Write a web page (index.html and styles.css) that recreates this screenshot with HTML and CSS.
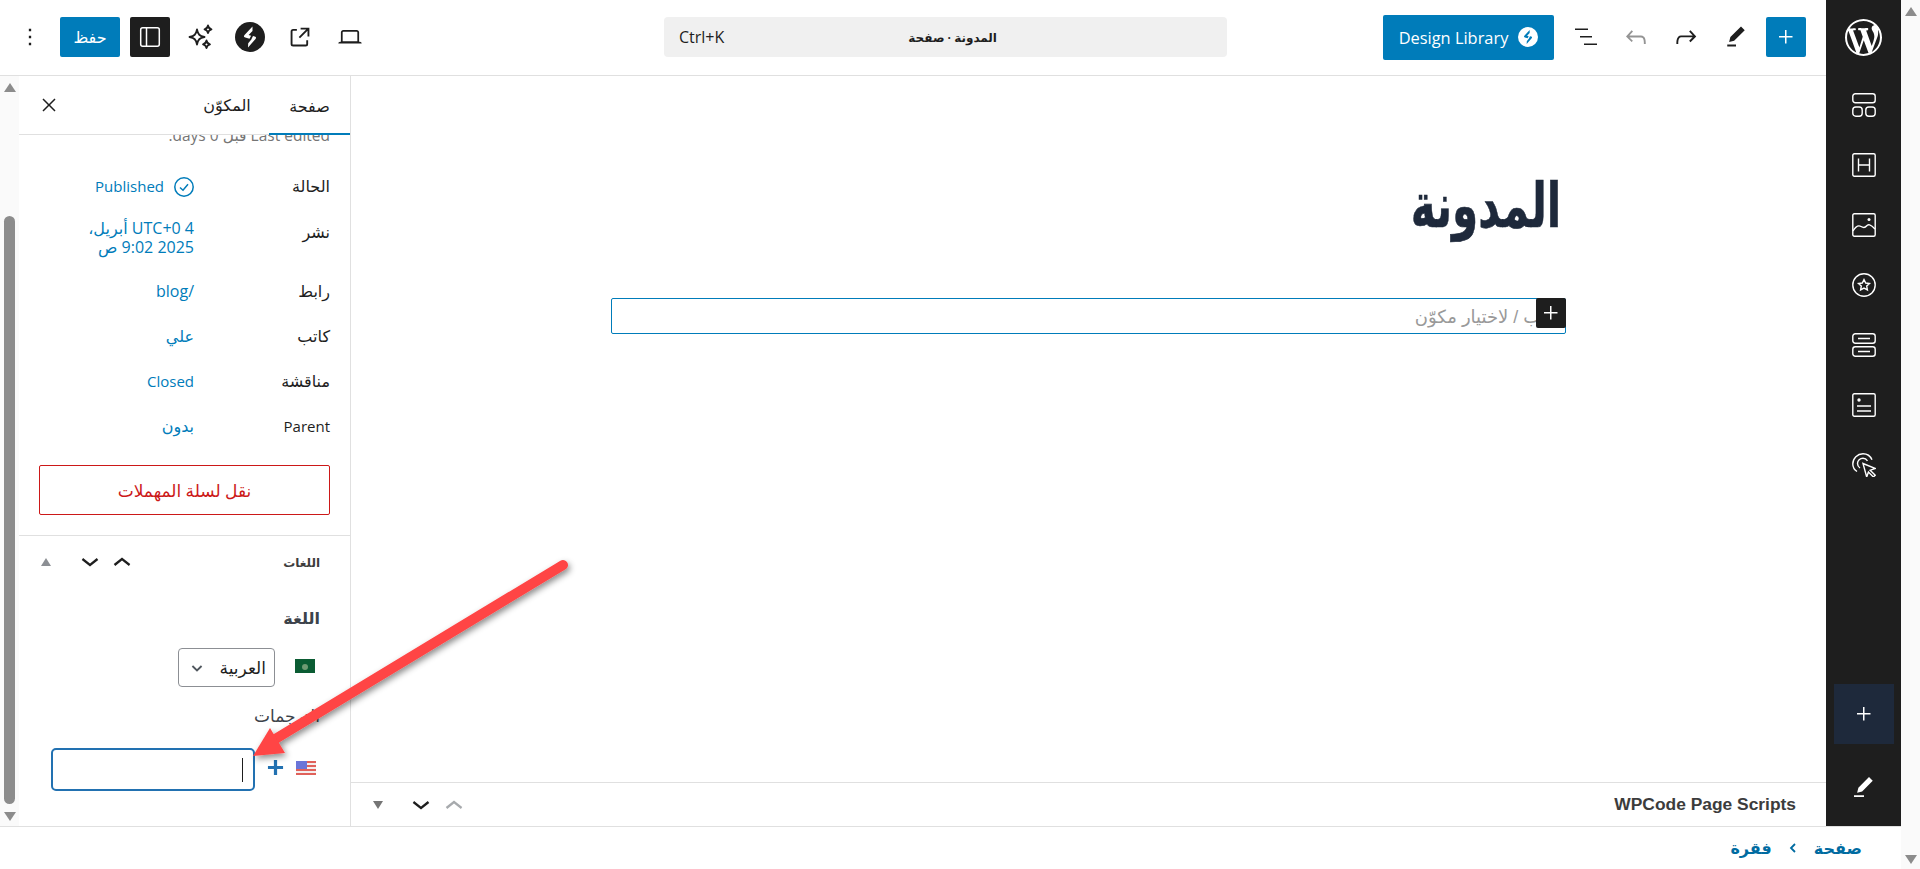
FILE: index.html
```html
<!DOCTYPE html>
<html lang="ar" dir="rtl">
<head>
<meta charset="utf-8">
<title>المدونة</title>
<link rel="stylesheet" href="styles.css">
</head>
<body>
<div class="page">
  <div class="vscroll">
    <span class="tri tri-up"></span>
    <span class="tri tri-down"></span>
  </div>
  <div class="shell">
    <div class="main">
      <aside class="rail">
        <div class="rail-top">
          <svg class="wp" viewBox="0 0 20 20"><path fill="#fff" d="M20 10c0-5.51-4.49-10-10-10C4.48 0 0 4.49 0 10c0 5.52 4.48 10 10 10 5.51 0 10-4.48 10-10zM7.78 15.37L4.37 6.22c.55-.02 1.17-.08 1.17-.08.5-.06.44-1.13-.06-1.11 0 0-1.45.11-2.37.11-.18 0-.37 0-.58-.01C4.12 2.69 6.87 1.11 10 1.11c2.33 0 4.45.87 6.05 2.34-.68-.11-1.65.39-1.65 1.58 0 .74.45 1.36.9 2.1.35.61.55 1.36.55 2.46 0 1.49-1.4 5-1.4 5l-3.03-8.37c.54-.02.82-.17.82-.17.5-.05.44-1.25-.06-1.22 0 0-1.44.12-2.38.12-.87 0-2.33-.12-2.33-.12-.5-.03-.56 1.2-.06 1.22l.92.08 1.26 3.41zM17.41 10c.24-.64.74-1.87.43-4.25.7 1.29 1.05 2.71 1.05 4.25 0 3.29-1.73 6.24-4.4 7.78.97-2.59 1.94-5.2 2.92-7.78zM6.1 18.09C3.12 16.65 1.11 13.53 1.11 10c0-1.3.23-2.48.72-3.59C3.25 10.3 4.67 14.2 6.1 18.09zm4.03-6.63l2.58 6.98c-.86.29-1.76.45-2.71.45-.79 0-1.57-.11-2.29-.33.81-2.38 1.62-4.74 2.42-7.1z"/></svg>
        </div>
        <div class="rail-icons">
          <svg class="ri" viewBox="0 0 24 24"><rect x="0.8" y="0.8" width="22.4" height="9" rx="2.5"/><rect x="0.8" y="14" width="9.4" height="9.2" rx="3"/><rect x="13.8" y="14" width="9.4" height="9.2" rx="3"/></svg>
          <svg class="ri" viewBox="0 0 24 24"><rect x="0.8" y="0.8" width="22.4" height="22.4" rx="1.5"/><path d="M6.5 5.5v13M17.5 5.5v13M6.5 12h11"/></svg>
          <svg class="ri" viewBox="0 0 24 24"><rect x="0.8" y="0.8" width="22.4" height="22.4" rx="1.5"/><path d="M1 18c3-5 5.500-6 8-4.500s4 1.500 5.500-.5 4-2 8.500 3"/><circle cx="17" cy="6.500" r="1.500" fill="#fff" stroke="none"/></svg>
          <svg class="ri" viewBox="0 0 24 24"><circle cx="12" cy="12" r="11.200"/><path d="M12 6.500l1.700 3.500 3.800.5-2.800 2.600.7 3.800-3.400-1.800-3.400 1.800.7-3.800-2.800-2.600 3.800-.5z"/></svg>
          <svg class="ri" viewBox="0 0 24 24"><rect x="0.8" y="0.8" width="22.400" height="9.400" rx="2.500"/><rect x="0.8" y="13.800" width="22.400" height="9.400" rx="2.500"/><path d="M6 5.500h12M6 18.500h12"/></svg>
          <svg class="ri" viewBox="0 0 24 24"><rect x="0.8" y="0.8" width="22.400" height="22.400" rx="1.500"/><circle cx="7" cy="7" r="1.700" fill="#fff" stroke="none"/><path d="M5 13h14M5 18h14"/></svg>
          <svg class="ri" viewBox="0 0 24 24"><path d="M5 18.500C2 16.500 .8 14 .8 11 .8 5 5.500 .8 11 .8c4 0 7.500 2.500 9 6"/><path d="M8 15c-1.500-1-2.500-2.500-2.500-4.500 0-3 2.500-5.200 5.500-5.200 2 0 3.500 1 4.500 2.500"/><path d="M11 10.500l12.500 5-5.300 1.700 5 5-1.800 1.800-5-5-1.700 5z"/></svg>
        </div>
        <div class="rail-bottom">
          <div class="rail-add"><svg class="ic-24" viewBox="0 0 24 24"><path fill="#fff" d="M11 12.500V18.500H12.500V12.500H18.500V11H12.500V5H11V11H5V12.500H11Z"/></svg></div>
          <div class="rail-pen"><svg class="ic-30" viewBox="0 0 24 24"><path fill="#fff" d="m19 7-3-3-8.500 8.500-1 4 4-1L19 7Zm-7 11.500H4V20h8v-1.500Z"/></svg></div>
        </div>
      </aside>
      <div class="workspace">
        <header class="topbar">
          <div class="tools-start">
            <button class="tb tb-blue"><svg class="ic-24" viewBox="0 0 24 24"><path fill="#fff" d="M11 12.500V18.500H12.500V12.500H18.500V11H12.500V5H11V11H5V12.500H11Z"/></svg></button>
            <button class="tb"><svg class="ic-30" viewBox="0 0 24 24"><path fill="#1e1e1e" d="m19 6.500-3-3-8.500 8.500-1 4 4-1L19 6.500Zm-7 11.500H5V19.500h7V18Z"/></svg></button>
            <button class="tb"><svg class="ic-30" viewBox="0 0 24 24"><path fill="#1e1e1e" d="M15.600 6.500l-1.100 1 2.900 3.300H8c-.9 0-1.700.3-2.300.9-1.400 1.500-1.400 4.200-1.400 5.600v.2h1.500v-.3c0-1.100 0-3.500 1-4.500.3-.3.7-.5 1.300-.5h9.200L14.500 15l1.100 1.100 4.600-4.600-4.600-5z"/></svg></button>
            <button class="tb"><svg class="ic-30" viewBox="0 0 24 24"><path fill="#949494" d="M18.300 11.700c-.6-.6-1.400-.9-2.300-.9H6.700l2.900-3.300-1.100-1-4.500 5L8.500 16l1-1-2.700-2.700H16c.5 0 .9.200 1.300.5 1 1 1 3.400 1 4.500v.3h1.500v-.2c0-1.500 0-4.300-1.500-5.700z"/></svg></button>
            <button class="tb"><svg class="ic-24" viewBox="0 0 24 24"><path fill="#1e1e1e" d="M1 3.500h13v1.500H1V3.500Zm5 7.500h12v1.500H6V11Zm17 7.500H10V20h13v-1.500Z"/></svg></button>
            <button class="design-lib"><svg class="ic-20" viewBox="0 0 30 30"><circle cx="15" cy="15" r="15" fill="#fff"/><path class="s-bolt" d="M17.500 4.500 9.500 13c-1 1.200-.6 2.200.8 2.600l4.200 1.200 1.600-3-2.500-.7 3.900-4.200zM13 25.500l7.500-8.500c1-1.200.6-2.200-.8-2.600l-1.700-.5-1.500 3 .2.100-3.500 4.200z"/></svg><span dir="ltr">Design Library</span></button>
          </div>
          <div class="search">
            <span class="search-title">المدونة · صفحة</span>
            <span class="search-key" dir="ltr">Ctrl+K</span>
          </div>
          <div class="tools-end">
            <button class="tb"><svg class="ic-28" viewBox="0 0 24 24"><path fill="#1e1e1e" d="M20.500 16h-.7V8c0-1.100-.9-2-2-2H6.200c-1.100 0-2 .9-2 2v8h-.7c-.8 0-1.500.7-1.500 1.500h20c0-.8-.7-1.500-1.500-1.500zM5.700 8c0-.3.2-.5.5-.5h11.600c.3 0 .5.200.5.500v7.600H5.700V8z"/></svg></button>
            <button class="tb"><svg class="ic-30" viewBox="0 0 24 24"><path fill="#1e1e1e" d="M19.500 4.500h-7V6h4.440l-5.970 5.970 1.060 1.060L18 7.060v4.440h1.500v-7Zm-13 1a2 2 0 0 0-2 2v10a2 2 0 0 0 2 2h10a2 2 0 0 0 2-2v-3H17v3a.5.5 0 0 1-.5.5h-10a.5.5 0 0 1-.5-.5v-10a.5.5 0 0 1 .5-.5h3V5.500h-3Z"/></svg></button>
            <button class="tb"><svg class="ic-30" viewBox="0 0 30 30"><circle cx="15" cy="15" r="15" fill="#1e1e1e"/><path fill="#fff" d="M17.500 4.500 9.500 13c-1 1.200-.6 2.200.8 2.600l4.200 1.200 1.600-3-2.500-.7 3.900-4.200zM13 25.500l7.500-8.500c1-1.200.6-2.200-.8-2.600l-1.700-.5-1.500 3 .2.100-3.500 4.200z"/></svg></button>
            <button class="tb"><svg class="ic-30" viewBox="0 0 30 30"><g fill="none" stroke="#1e1e1e" stroke-width="1.800" stroke-linejoin="round"><path d="M12 7.500c1 5 2.500 6.500 7.500 7.500-5 1-6.500 2.500-7.500 7.500-1-5-2.500-6.500-7.500-7.500 5-1 6.500-2.500 7.500-7.500z"/><path d="M23 3.500c.5 2.500 1.200 3.200 3.500 3.800-2.300.5-3 1.200-3.500 3.700-.5-2.500-1.200-3.200-3.500-3.700 2.300-.6 3-1.300 3.500-3.800z"/><path d="M21.500 18.500c.5 2.500 1.200 3.200 3.500 3.800-2.300.5-3 1.200-3.500 3.700-.5-2.500-1.200-3.200-3.500-3.700 2.300-.6 3-1.300 3.500-3.800z"/></g></svg></button>
            <button class="tb tb-dark"><svg class="ic-24" viewBox="0 0 24 24"><rect x="2.700" y="2.700" width="18.600" height="18.600" rx="2" fill="none" stroke="#fff" stroke-width="1.500"/><path d="M8.500 3v18" stroke="#fff" stroke-width="1.500"/></svg></button>
            <button class="save">حفظ</button>
            <button class="tb"><svg class="ic-28" viewBox="0 0 24 24"><path fill="#1e1e1e" d="M13 19h-2v-2h2v2zm0-6h-2v-2h2v2zm0-6h-2V5h2v2z"/></svg></button>
          </div>
        </header>
        <div class="work-row">
          <section class="canvas">
            <div class="canvas-scroll">
              <div class="doc">
                <h1 class="doc-title">المدونة</h1>
                <div class="block">
                  <span class="block-hint">اكتب / لاختيار مكوّن</span>
                  <span class="block-add"><svg class="ic-24" viewBox="0 0 24 24"><path fill="#fff" d="M11 12.500V18.500H12.500V12.500H18.500V11H12.500V5H11V11H5V12.500H11Z"/></svg></span>
                </div>
              </div>
            </div>
            <div class="meta-bar">
              <span class="meta-title" dir="ltr">WPCode Page Scripts</span>
              <div class="panel-ctrls ctrls-bottom">
                <svg class="ic-chev muted" viewBox="0 0 24 24"><path d="M6.500 13.400L12 9l5.500 4.400-.9 1.200L12 11l-4.500 3.600-1-1.200z"/></svg>
                <svg class="ic-chev" viewBox="0 0 24 24"><path d="M17.500 10.600L12 15l-5.500-4.400.9-1.200L12 13l4.500-3.600 1 1.200z"/></svg>
                <span class="tri-small tri-small-down"></span>
              </div>
            </div>
          </section>
          <aside class="settings">
            <div class="settings-body">
              <div class="tabs">
                <span class="tab tab-active">صفحة</span>
                <span class="tab">المكوّن</span>
                <svg class="tabs-close ic-24" viewBox="0 0 24 24"><path fill="#1e1e1e" d="m13.060 12 5.470-5.470-1.060-1.060L12 10.940 6.530 5.470 5.470 6.530 10.940 12l-5.470 5.470 1.060 1.060L12 13.060l5.470 5.470 1.060-1.060L13.060 12Z"/></svg>
              </div>
              <div class="settings-scroll">
                <div class="panel">
                  <p class="edited">Last edited قبل 0 days.</p>
                  <div class="row"><span class="row-label">الحالة</span><span class="row-value row-latin status"><svg class="ic-20" viewBox="0 0 20 20"><circle cx="10" cy="10" r="9.200" fill="none" stroke="#007cba" stroke-width="1.500"/><path d="M6 10.500l3 2.700 5-6" fill="none" stroke="#007cba" stroke-width="1.500"/></svg><span dir="ltr">Published</span></span></div>
                  <div class="row row-date"><span class="row-label">نشر</span><span class="row-value">4 UTC+0 أبريل،<br>2025 9:02 ص</span></div>
                  <div class="row"><span class="row-label">رابط</span><span class="row-value">/blog</span></div>
                  <div class="row"><span class="row-label">كاتب</span><span class="row-value">علي</span></div>
                  <div class="row"><span class="row-label">مناقشة</span><span class="row-value row-latin">Closed</span></div>
                  <div class="row"><span class="row-label row-latin">Parent</span><span class="row-value">بدون</span></div>
                  <button class="trash">نقل لسلة المهملات</button>
                </div>
                <div class="panel-lang">
                  <div class="lang-head">
                    <span class="lang-title">اللغات</span>
                    <div class="panel-ctrls ctrls-lang">
                      <svg class="ic-chev" viewBox="0 0 24 24"><path d="M6.500 13.400L12 9l5.500 4.400-.9 1.200L12 11l-4.500 3.600-1-1.200z"/></svg>
                      <svg class="ic-chev" viewBox="0 0 24 24"><path d="M17.500 10.600L12 15l-5.500-4.400.9-1.200L12 13l4.500-3.600 1 1.200z"/></svg>
                      <span class="tri-small tri-small-up"></span>
                    </div>
                  </div>
                  <div class="lang-label lang-label-first">اللغة</div>
                  <div class="lang-row">
                    <svg class="flag" viewBox="0 0 20 14"><rect width="20" height="14" fill="#0b5c33"/><circle cx="10" cy="8" r="3" fill="#6f9a72"/></svg>
                    <div class="select"><span>العربية</span><svg class="ic-chev-s" viewBox="0 0 24 24"><path d="M17.500 9.600L12 15 6.500 9.600" fill="none" stroke="#50575e" stroke-width="2.200"/></svg></div>
                  </div>
                  <div class="lang-label lang-label-second">الترجمات</div>
                  <div class="trans-row">
                    <svg class="flag flag-us" viewBox="0 0 20 14"><rect width="20" height="14" fill="#f4eeee"/><path d="M0 1h20M0 5h20M0 9h20M0 13h20" stroke="#e0615a" stroke-width="2"/><rect width="11" height="8" fill="#6a75d8"/></svg>
                    <svg class="ic-plus" viewBox="0 0 18 18"><path d="M9 1v16M1 9h16" stroke="#2271b1" stroke-width="3.400" fill="none"/></svg>
                    <div class="trans-input"><span class="caret"></span></div>
                  </div>
                </div>
              </div>
            </div>
            <div class="side-scroll">
              <span class="tri tri-up"></span>
              <span class="side-thumb"></span>
              <span class="tri tri-down"></span>
            </div>
          </aside>
        </div>
      </div>
    </div>
    <footer class="crumbs">
      <span>صفحة</span>
      <svg class="crumb-sep" viewBox="0 0 12 12"><path d="M8 2 4 6l4 4" fill="none" stroke="#006ba1" stroke-width="1.800"/></svg>
      <span>فقرة</span>
    </footer>
  </div>
</div>
<svg class="arrow" viewBox="0 0 1920 869">
  <defs><filter id="arrow-shadow" x="-10%" y="-10%" width="120%" height="130%"><feDropShadow dx="2" dy="3" stdDeviation="3" flood-color="#000" flood-opacity=".45"/></filter></defs>
  <g filter="url(#arrow-shadow)">
    <path d="M563 565 272 741" stroke="#ff4444" stroke-width="10" stroke-linecap="round" fill="none"/>
    <path d="M253 756 270 728 285 753Z" fill="#ff4444"/>
  </g>
</svg>
</body>
</html>
```

FILE: styles.css
```css
* { box-sizing: border-box; }
html, body { margin: 0; height: 100%; overflow: hidden; background: #fff; }
body { font-family: "Open Sans", "DejaVu Sans", sans-serif; font-size: 14px; color: #1e1e1e; }
button { font: inherit; border: 0; background: none; padding: 0; margin: 0; color: inherit; }
svg { display: block; flex: none; }
p, h1 { margin: 0; }

.page { display: flex; height: 869px; width: 1920px; }
.vscroll { width: 19px; flex: none; background: #fafafa; display: flex; flex-direction: column; justify-content: space-between; align-items: center; padding: 7px 0 5px; }
.shell { flex: 1; display: flex; flex-direction: column; min-width: 0; }
.main { height: 826px; display: flex; }

.tri { display: block; width: 0; height: 0; border-left: 6.5px solid transparent; border-right: 6.5px solid transparent; }
.tri-up { border-bottom: 9px solid #8c8c8c; }
.tri-down { border-top: 9px solid #8c8c8c; }
.tri-small { display: block; width: 0; height: 0; border-left: 5px solid transparent; border-right: 5px solid transparent; }
.tri-small-up { border-bottom: 8px solid #8c8f94; }
.tri-small-down { border-top: 8px solid #757575; }

.rail { width: 75px; flex: none; background: #1e1e1e; display: flex; flex-direction: column; align-items: center; }
.rail-top { height: 75px; display: flex; align-items: center; justify-content: center; flex: none; }
.wp { width: 37px; height: 37px; }
.rail-icons { display: flex; flex-direction: column; gap: 36px; padding-top: 18px; align-items: center; }
.ri { width: 24px; height: 24px; fill: none; stroke: #fff; stroke-width: 1.400; }
.rail-bottom { margin-top: auto; display: flex; flex-direction: column; align-items: center; }
.rail-add { width: 60px; height: 60px; background: #1e293b; display: flex; align-items: center; justify-content: center; }
.rail-pen { height: 82px; display: flex; align-items: flex-start; justify-content: center; padding-top: 28px; }

.ic-24 { width: 24px; height: 24px; }
.ic-20 { width: 20px; height: 20px; }
.ic-28 { width: 28px; height: 28px; }
.ic-30 { width: 30px; height: 30px; }
.ic-chev { width: 36px; height: 36px; fill: #1e1e1e; }
.ic-chev.muted { fill: #a7aaad; }
.ic-chev-s { width: 20px; height: 20px; }
.ic-plus { width: 17px; height: 17px; margin-bottom: 4px; }
.s-bolt { fill: #007cba; }

.workspace { flex: 1; min-width: 0; display: flex; flex-direction: column; }
.topbar { height: 76px; flex: none; border-bottom: 1px solid #e0e0e0; display: flex; align-items: center; padding: 0 20px 1px 10px; }
.tools-start { display: flex; align-items: center; gap: 10px; }
.tools-end { display: flex; align-items: center; gap: 10px; margin-right: auto; }
.tb { width: 40px; height: 40px; border-radius: 2px; display: flex; align-items: center; justify-content: center; }
.tb-blue { background: #007cba; }
.tb-dark { background: #1e1e1e; }
.design-lib { width: 171px; height: 45px; margin-right: 2px; background: #007cba; color: #fff; border-radius: 2px; display: flex; align-items: center; justify-content: center; gap: 10px; font-size: 16.400px; }
.save { width: 60px; height: 40px; background: #007cba; color: #fff; border-radius: 2px; font-size: 16px; font-weight: 400; }
.search { width: 563px; height: 40px; margin-right: 156px; background: #f0f0f0; border-radius: 4px; display: flex; align-items: center; padding-left: 15px; }
.search-title { flex: 1; text-align: center; font-size: 12px; font-weight: 700; padding-right: 46px; }
.search-key { font-size: 16px; color: #1e1e1e; }

.work-row { flex: 1; display: flex; min-height: 0; }
.canvas { flex: 1; min-width: 0; display: flex; flex-direction: column; }
.canvas-scroll { flex: 1; display: flex; justify-content: center; min-height: 0; }
.doc { width: 955px; padding-top: 90px; }
.doc-title { font-family: "Liberation Sans", "DejaVu Sans", sans-serif; font-size: 62px; line-height: 80px; font-weight: 700; color: #1e293b; padding-right: 7px; height: 132px; transform: scaleX(.68); transform-origin: 100% 50%; -webkit-text-stroke: .6px #1e293b; }
.block { position: relative; height: 36px; border: 1px solid #007cba; border-radius: 2px; display: flex; align-items: center; padding-right: 5px; }
.block-hint { font-family: "Liberation Sans", "DejaVu Sans", sans-serif; font-size: 18px; color: #999; padding-top: 2px; }
.block-add { position: absolute; top: -1px; right: -1px; width: 30px; height: 30px; background: #1e1e1e; border-radius: 2px; display: flex; align-items: center; justify-content: center; }
.meta-bar { height: 44px; flex: none; border-top: 1px solid #e0e0e0; display: flex; align-items: center; justify-content: space-between; padding: 0 30px 0 22px; }
.meta-title { font-family: "Liberation Sans", sans-serif; font-weight: 700; font-size: 17.400px; color: #3c3c3c; }

.panel-ctrls { display: flex; align-items: center; }
.ctrls-bottom .ic-chev { margin-right: -3px; }
.ctrls-bottom .tri-small { margin-right: 20px; }
.ctrls-lang .ic-chev + .ic-chev { margin-right: -4px; }
.ctrls-lang .tri-small { margin-right: 21px; }

.settings { width: 351px; flex: none; display: flex; border-right: 1px solid #e0e0e0; }
.settings-body { flex: 1; min-width: 0; display: flex; flex-direction: column; }
.side-scroll { width: 19px; flex: none; background: #fafafa; display: flex; flex-direction: column; align-items: center; padding: 7px 0 5px; }
.side-thumb { width: 11px; flex: 1; margin: 124px 0 8px; background: #8c8c8c; border-radius: 6px; }

.tabs { height: 59px; flex: none; border-bottom: 1px solid #e0e0e0; display: flex; align-items: stretch; position: relative; padding-left: 18px; }
.tab { width: 81px; display: flex; align-items: center; justify-content: center; font-size: 16px; }
.tab + .tab { width: 84px; }
.tab-active { box-shadow: inset 0 -2px 0 #007cba; margin-bottom: -1px; }
.tabs-close { margin: auto auto auto 0; }
.settings-scroll { flex: 1; min-height: 0; overflow: hidden; }
.panel { padding: 0 20px 20px; border-bottom: 1px solid #e0e0e0; }
.edited { margin-top: -9px; height: 38px; line-height: 18px; font-size: 15.500px; color: #757575; }
.row { display: flex; align-items: center; height: 45px; font-size: 16px; }
.row-label { width: 136px; flex: none; line-height: 19px; }
.row-value { color: #007cba; line-height: 19px; }
.row-latin { font-size: 15px; }
.status { display: flex; align-items: center; gap: 10px; }
.row-date { height: 60px; align-items: flex-start; padding-top: 10px; }
.row-date .row-label { margin-top: 4px; }
.trash { display: block; width: 291px; height: 50px; margin-top: 16px; border: 1px solid #cc1818; border-radius: 2px; color: #cc1818; font-size: 17px; }

.panel-lang { padding: 0 30px 0 0; }
.lang-head { height: 52px; display: flex; align-items: center; justify-content: space-between; padding-left: 22px; }
.lang-title { font-size: 12px; font-weight: 700; color: #3c3c3c; }
.lang-label { font-size: 16px; font-weight: 600; line-height: 20px; color: #3c434a; }
.lang-label-first { margin-top: 20px; }
.lang-label-second { margin-top: 19px; font-weight: 400; font-size: 17px; }
.lang-row { display: flex; align-items: center; margin-top: 20px; gap: 20px; padding-right: 5px; }
.flag { width: 20px; height: 14px; margin-bottom: 4px; }
.select { width: 97px; height: 39px; border: 1px solid #8c8f94; border-radius: 4px; display: flex; align-items: center; justify-content: space-between; padding: 0 8px; font-size: 17px; }
.trans-row { display: flex; align-items: center; margin-top: 22px; padding-right: 4px; gap: 12px; }
.trans-input { width: 204px; height: 43px; border: 2px solid #2271b1; border-radius: 5px; display: flex; align-items: center; padding-right: 10px; }
.caret { width: 1px; height: 24px; background: #1e1e1e; }

.crumbs { height: 43px; flex: none; border-top: 1px solid #e0e0e0; display: flex; align-items: center; padding-right: 39px; gap: 15px; color: #006ba1; font-weight: 700; font-size: 16px; }
.crumb-sep { width: 12px; height: 12px; }

.arrow { position: absolute; top: 0; left: 0; width: 1920px; height: 869px; pointer-events: none; }
```
